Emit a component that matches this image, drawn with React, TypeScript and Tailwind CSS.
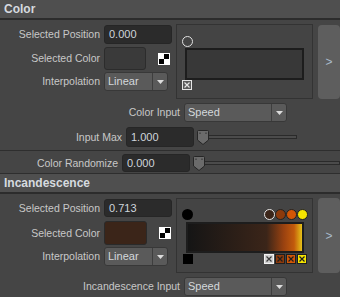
import React from "react";

function Label({ className, children }: { className: string; children: React.ReactNode }) {
  return (
    <div className={`${className} shrink-0 pr-[4px] text-right text-[10.5px] leading-none text-[#c8c8c8]`}>
      {children}
    </div>
  );
}

function Field({ className, value }: { className: string; value: string }) {
  return (
    <div
      className={`${className} flex shrink-0 items-center rounded-[3px] border border-[#262626] bg-[#2b2b2b] pl-[4px] text-[11px] text-[#cfd5db]`}
    >
      {value}
    </div>
  );
}

function Dropdown({ className, value }: { className: string; value: string }) {
  return (
    <div className={`${className} flex shrink-0 rounded-[3px] border border-[#383838] bg-[#5a5a5a]`}>
      <div className="flex flex-1 items-center pl-[3px] text-[11px] text-[#d4d8dc]">{value}</div>
      <div className="flex w-[15px] items-center justify-center border-l border-[#3e3e3e]">
        <svg width="7" height="4" viewBox="0 0 7 4">
          <path d="M0 0H7L3.5 4Z" fill="#dcdcdc" />
        </svg>
      </div>
    </div>
  );
}

function Checker() {
  return (
    <div className="ml-[12px] grid h-[12px] w-[12px] shrink-0 grid-cols-2 border border-white">
      <div className="bg-white" />
      <div className="bg-black" />
      <div className="bg-black" />
      <div className="bg-white" />
    </div>
  );
}

function Thumb() {
  return (
    <svg width="12" height="15" viewBox="0 0 12 15" className="relative z-10 shrink-0">
      <path d="M1.5 0.5H10.5Q11.5 0.5 11.5 1.5V10L6 14.5L0.5 10V1.5Q0.5 0.5 1.5 0.5Z" fill="#6b6b6b" stroke="#262626" />
      <path d="M3 2.5V4M9 2.5V4" stroke="#2e2e2e" />
    </svg>
  );
}

function Slider({ className }: { className: string }) {
  return (
    <div className={`${className} flex items-center`}>
      <Thumb />
      <div className="-ml-[1px] h-[4px] flex-1 border border-[#2a2a2a] bg-[#4b4b4b]" />
    </div>
  );
}

function XBox({ fill, edge, mark }: { fill: string; edge: string; mark: string }) {
  return (
    <svg width="10" height="10" viewBox="0 0 10 10" className="shrink-0">
      <rect x="0.5" y="0.5" width="9" height="9" fill={fill} stroke={edge} />
      <path d="M2.5 2.5L7.5 7.5M7.5 2.5L2.5 7.5" stroke={mark} strokeWidth="1.2" />
    </svg>
  );
}

function SideButton({ className }: { className: string }) {
  return (
    <div
      className={`${className} ml-[5px] flex w-[22px] shrink-0 items-center justify-center rounded-[4px] bg-[#5e5e5e] text-[12px] text-[#a9bacb]`}
    >
      &gt;
    </div>
  );
}

function Header({ title, className }: { title: string; className: string }) {
  return (
    <div
      className={`${className} flex shrink-0 items-center border-b-2 border-[#2c2c2c] bg-[#4f4f4f] pl-[4px] text-[12px] font-bold text-[#d6dadf]`}
    >
      {title}
    </div>
  );
}

export default function App() {
  return (
    <div className="flex h-[297px] w-[340px] flex-col overflow-hidden bg-[#454545] font-['Liberation_Sans',Arial,sans-serif]">
      <Header title="Color" className="h-[20px]" />

      {/* Color ramp */}
      <div className="flex shrink-0 pt-[4px]">
        <div className="flex w-[176px] shrink-0 flex-col">
          <div className="mt-[1px] flex h-[19px] items-center">
            <Label className="w-[104px]">Selected Position</Label>
            <Field className="h-full w-[68px]" value="0.000" />
          </div>
          <div className="mt-[3px] flex h-[23px] items-center">
            <Label className="w-[104px]">Selected Color</Label>
            <div className="h-full w-[42px] shrink-0 rounded-[3px] border border-[#2c2c2c] bg-[#3a3a3a]" />
            <Checker />
          </div>
          <div className="mt-[2px] flex h-[19px] items-center">
            <Label className="w-[104px]">Interpolation</Label>
            <Dropdown className="h-full w-[64px]" value="Linear" />
          </div>
        </div>
        <div className="relative h-[75px] w-[137px] shrink-0 border border-[#333333] bg-[#444444]">
          <div className="absolute left-[5px] top-[11px] h-[11px] w-[11px] rounded-full border-[1.5px] border-[#e2e2e2]" />
          <div className="absolute left-[8px] top-[23px] h-[32px] w-[119px] border-2 border-[#1d1d1d] bg-[#383838]" />
          <div className="absolute left-[5px] top-[55px]">
            <XBox fill="#5a5a5a" edge="#e6e6e6" mark="#e6e6e6" />
          </div>
        </div>
        <SideButton className="mt-[1px] h-[74px]" />
      </div>

      <div className="mt-[4px] flex h-[19px] shrink-0 items-center">
        <Label className="w-[184px]">Color Input</Label>
        <Dropdown className="h-full w-[103px]" value="Speed" />
      </div>
      <div className="mt-[5px] flex h-[20px] shrink-0 items-center">
        <Label className="w-[126px]">Input Max</Label>
        <Field className="h-full w-[68px]" value="1.000" />
        <Slider className="ml-[3px] w-[100px]" />
      </div>
      <div className="mt-[3px] shrink-0 border-t border-[#2e2e2e]" />
      <div className="mt-[3px] flex h-[18px] shrink-0 items-center">
        <Label className="w-[122px]">Color Randomize</Label>
        <Field className="h-full w-[68px]" value="0.000" />
        <Slider className="ml-[3px] flex-1" />
      </div>

      <Header title="Incandescence" className="mt-[1px] h-[21px] border-t border-t-[#2e2e2e]" />

      {/* Incandescence ramp */}
      <div className="flex shrink-0 pt-[4px]">
        <div className="flex w-[176px] shrink-0 flex-col">
          <div className="mt-[1px] flex h-[18px] items-center">
            <Label className="w-[104px]">Selected Position</Label>
            <Field className="h-full w-[68px]" value="0.713" />
          </div>
          <div className="mt-[4px] flex h-[24px] items-center">
            <Label className="w-[104px]">Selected Color</Label>
            <div className="h-full w-[43px] shrink-0 rounded-[3px] border border-[#2a2a2a] bg-[#3b2519]" />
            <Checker />
          </div>
          <div className="mt-[2px] flex h-[19px] items-center">
            <Label className="w-[104px]">Interpolation</Label>
            <Dropdown className="h-full w-[64px]" value="Linear" />
          </div>
        </div>
        <div className="relative h-[75px] w-[137px] shrink-0 border border-[#333333] bg-[#444444]">
          <div className="absolute left-[5px] top-[10px] h-[11px] w-[11px] rounded-full bg-black" />
          <div className="absolute left-[87px] top-[10px] flex">
            <div className="h-[11px] w-[11px] rounded-full border-[1.5px] border-[#e8e8e8] bg-[#3b2519]" />
            <div className="h-[11px] w-[11px] rounded-full border border-[#222222] bg-[#8c3a0c]" />
            <div className="h-[11px] w-[11px] rounded-full border border-[#222222] bg-[#d25606]" />
            <div className="h-[11px] w-[11px] rounded-full border border-[#222222] bg-[#f5e400]" />
          </div>
          <div className="absolute left-[9px] top-[23px] h-[31px] w-[118px] border-2 border-[#1d1d1d] bg-[linear-gradient(to_right,#151515_0%,#3b2519_69%,#9a4210_84%,#c25a0c_93%,#e6c218_100%)]" />
          <div className="absolute left-[6px] top-[55px] h-[10px] w-[10px] bg-black" />
          <div className="absolute left-[87px] top-[55px] flex gap-[1px]">
            <XBox fill="#cfcfcf" edge="#f2f2f2" mark="#3a3a3a" />
            <XBox fill="#8c3a0c" edge="#1e1e1e" mark="#1e1e1e" />
            <XBox fill="#d25606" edge="#1e1e1e" mark="#1e1e1e" />
            <XBox fill="#f5e400" edge="#1e1e1e" mark="#1e1e1e" />
          </div>
        </div>
        <SideButton className="h-[75px]" />
      </div>

      <div className="mt-[4px] flex h-[19px] shrink-0 items-center">
        <Label className="w-[184px]">Incandescence Input</Label>
        <Dropdown className="h-full w-[103px]" value="Speed" />
      </div>
    </div>
  );
}
